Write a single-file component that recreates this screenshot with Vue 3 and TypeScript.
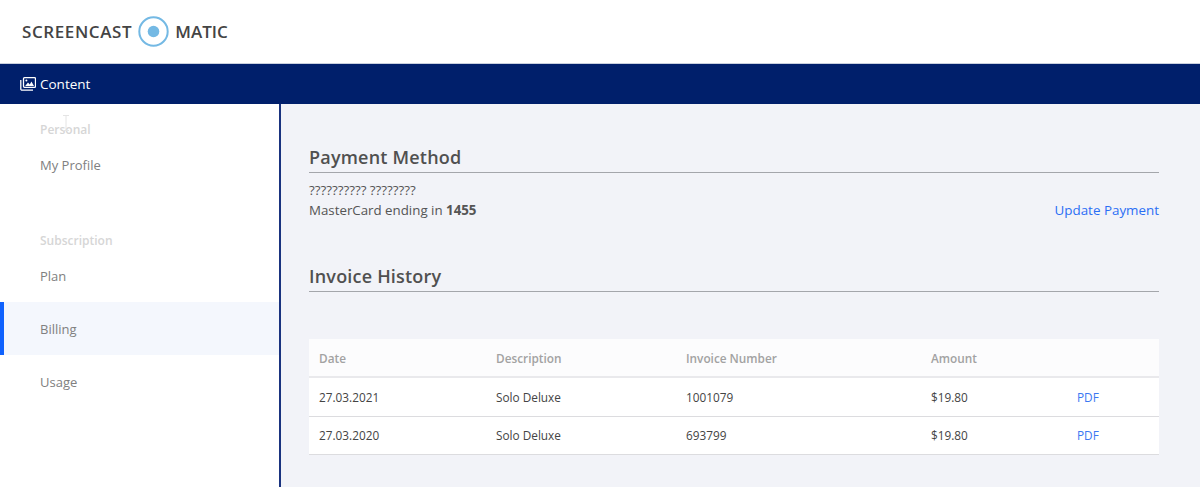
<script setup lang="ts">
const personalLinks = ['My Profile'];
const subscriptionLinks = ['Plan', 'Billing', 'Usage'];

const invoices = [
  { date: '27.03.2021', description: 'Solo Deluxe', number: '1001079', amount: '$19.80' },
  { date: '27.03.2020', description: 'Solo Deluxe', number: '693799', amount: '$19.80' },
];
</script>

<template>
  <div class="page">
    <header class="header">
      <div class="logo">
        <span class="logo-first">SCREENCAST</span>
        <svg class="logo-mark" width="31" height="31" viewBox="0 0 31 31">
          <circle cx="15.5" cy="15.5" r="14.2" fill="none" stroke="#74b9e4" stroke-width="2" />
          <circle cx="15.5" cy="15.5" r="5.8" fill="#74b9e4" />
        </svg>
        <span>MATIC</span>
      </div>
    </header>

    <nav class="topnav">
      <svg class="topnav-icon" width="16" height="14" viewBox="0 0 16 14">
        <rect x="3.5" y="0.7" width="12" height="9.6" rx="1" fill="none" stroke="#fff" stroke-width="1.3" />
        <path d="M0.8 3v9a1.2 1.2 0 0 0 1.2 1.2h11" fill="none" stroke="#fff" stroke-width="1.3" />
        <path d="M5.2 9l2.8-3.4 1.8 1.8 1.6-3 2.6 4.6z" fill="#fff" />
        <circle cx="6.4" cy="3.4" r="1" fill="#fff" />
      </svg>
      <span>Content</span>
    </nav>

    <div class="body">
      <aside class="sidebar">
        <svg class="cursor" width="8" height="16" viewBox="0 0 8 16">
          <path d="M1 .5h6M4 .5v15M1 15.5h6" fill="none" stroke="#e4e4e4" stroke-width="1" />
        </svg>
        <div class="group-label first">Personal</div>
        <a v-for="link in personalLinks" :key="link" class="side-link">{{ link }}</a>
        <div class="group-label second">Subscription</div>
        <a
          v-for="link in subscriptionLinks"
          :key="link"
          class="side-link"
          :class="{ active: link === 'Billing' }"
        >{{ link }}</a>
      </aside>

      <main class="main">
        <h2 class="title">Payment Method</h2>
        <div class="payment">
          <div>
            <div class="line">?????????? ????????</div>
            <div class="line">MasterCard ending in <strong>1455</strong></div>
          </div>
          <a class="update">Update Payment</a>
        </div>

        <h2 class="title invoice-title">Invoice History</h2>

        <div class="table">
          <div class="row head">
            <div>Date</div>
            <div>Description</div>
            <div>Invoice Number</div>
            <div>Amount</div>
            <div></div>
          </div>
          <div v-for="inv in invoices" :key="inv.number" class="row">
            <div>{{ inv.date }}</div>
            <div>{{ inv.description }}</div>
            <div>{{ inv.number }}</div>
            <div>{{ inv.amount }}</div>
            <a class="pdf">PDF</a>
          </div>
        </div>
      </main>
    </div>
  </div>
</template>

<style>
html, body {
  margin: 0;
  overflow: hidden;
}
</style>

<style scoped>
.page {
  display: flex;
  flex-direction: column;
  height: 487px;
  font-family: 'Open Sans', sans-serif;
  color: #555;
  background: #f2f3f8;
}

.header {
  height: 63px;
  background: #fff;
  border-bottom: 1px solid #c9d0de;
  display: flex;
  align-items: center;
  padding-left: 22px;
}

.logo {
  display: flex;
  align-items: center;
  gap: 6px;
  font-size: 17px;
  font-weight: 600;
  color: #444;
}

.logo-first {
  letter-spacing: 0.6px;
}

.topnav {
  height: 40px;
  background: #001f6b;
  color: #fff;
  display: flex;
  align-items: center;
  gap: 4px;
  padding-left: 20px;
  font-size: 13.5px;
}

.body {
  flex: 1;
  display: flex;
  min-height: 0;
}

.sidebar {
  position: relative;
  width: 279px;
  background: #fff;
  border-right: 2px solid #1a337f;
  display: flex;
  flex-direction: column;
}

.cursor {
  position: absolute;
  left: 62px;
  top: 11px;
}

.group-label {
  padding-left: 40px;
  font-size: 12px;
  font-weight: 600;
  line-height: 16px;
  color: #d6d6d6;
}

.group-label.first {
  margin-top: 18px;
}

.group-label.second {
  margin-top: 42px;
}

.side-link {
  height: 53px;
  display: flex;
  align-items: center;
  padding-left: 40px;
  font-size: 13px;
  color: #808080;
}

.side-link.active {
  background: #f4f7fd;
  box-shadow: inset 4px 0 0 #0f62fe;
}

.main {
  flex: 1;
  padding: 39px 41px 0 28px;
}

.title {
  margin: 0;
  font-size: 18px;
  font-weight: 550;
  line-height: 29px;
  color: #505050;
  border-bottom: 1px solid #a4a6ab;
  letter-spacing: 0.2px;
}

.invoice-title {
  margin-top: 42px;
}

.payment {
  display: flex;
  justify-content: space-between;
  align-items: flex-end;
  margin-top: 7px;
  font-size: 13.3px;
  line-height: 20px;
}

.update {
  font-size: 13.4px;
  color: #2a6ef5;
}

.table {
  margin-top: 47px;
  background: #fff;
  font-size: 11.8px;
}

.row {
  display: grid;
  grid-template-columns: 177px 190px 245px 146px 1fr;
  align-items: center;
  height: 37.5px;
  padding-left: 10px;
  border-bottom: 1px solid #dcdcdf;
  color: #444;
}

.row.head {
  height: 37px;
  background: #fcfcfd;
  border-bottom: 2px solid #e9e9ec;
  color: #a2a2a2;
  font-weight: 600;
}

.pdf {
  color: #3a78f2;
}
</style>
